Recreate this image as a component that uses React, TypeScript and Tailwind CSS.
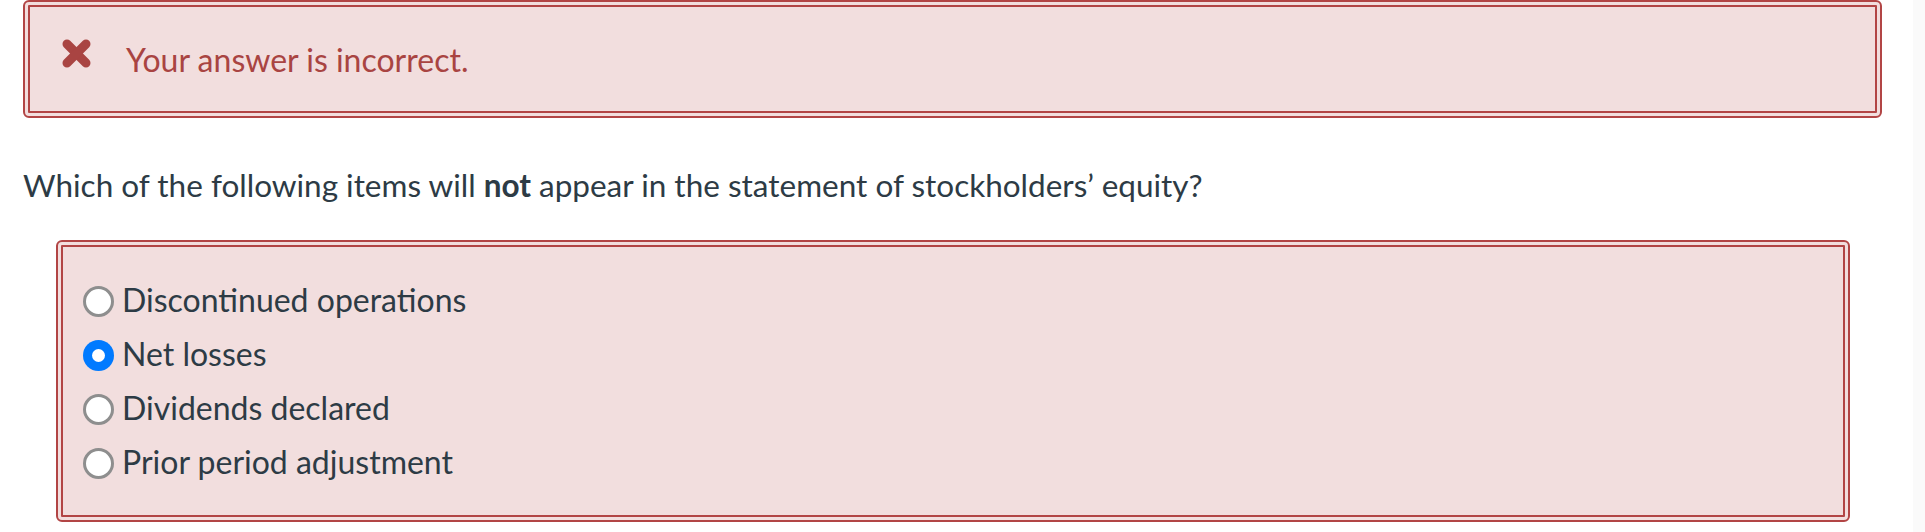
import React from "react";

const options = [
  { label: "Discontinued operations", checked: false },
  { label: "Net losses", checked: true },
  { label: "Dividends declared", checked: false },
  { label: "Prior period adjustment", checked: false },
];

function Radio({ checked }: { checked: boolean }) {
  if (checked) {
    return (
      <span className="mt-[13px] flex h-[31px] w-[31px] shrink-0 items-center justify-center rounded-full bg-[#007aff]">
        <span className="h-[13px] w-[13px] rounded-full bg-white" />
      </span>
    );
  }
  return (
    <span className="mt-[13px] block h-[31px] w-[31px] shrink-0 rounded-full border-[3px] border-[#8e8e8e] bg-white" />
  );
}

export default function App() {
  return (
    <div
      className="flex min-h-[532px] w-full bg-white text-[#2d3b45]"
      style={{ fontFamily: "Lato, 'Open Sans', sans-serif" }}
    >
      <div className="flex-1">
        {/* Feedback banner */}
        <div className="ml-[23px] w-[1859px] rounded-[6px] border-2 border-[#b24545] bg-[#f2dede] p-[3px]">
          <div className="flex h-[108px] items-start rounded-[1px] border-2 border-[#b24545] pl-[32px] pt-[32px]">
            <svg width="29" height="29" viewBox="0 0 29 29" className="shrink-0">
              <line x1="5" y1="5" x2="24" y2="24" stroke="#a94442" strokeWidth="9" strokeLinecap="round" />
              <line x1="24" y1="5" x2="5" y2="24" stroke="#a94442" strokeWidth="9" strokeLinecap="round" />
            </svg>
            <span className="ml-[35px] mt-[2px] text-[32px] leading-[38px] text-[#a94442]">
              Your answer is incorrect.
            </span>
          </div>
        </div>

        {/* Question */}
        <p className="mt-[48px] pl-[23px] text-[31.5px] leading-[38px]">
          Which of the following items will <strong className="font-bold">not</strong> appear in the statement of stockholders’ equity?
        </p>

        {/* Answers */}
        <div className="ml-[56px] mt-[36px] w-[1794px] rounded-[6px] border-2 border-[#b24545] bg-[#f2dede] p-[3px]">
          <div className="rounded-[1px] border-2 border-[#b24545] pb-[26px] pl-[20px] pt-[26px]">
            {options.map((o) => (
              <label key={o.label} className="flex h-[54px] items-start gap-[8px]">
                <Radio checked={o.checked} />
                <span className="text-[32px] leading-[54px]">{o.label}</span>
              </label>
            ))}
          </div>
        </div>
      </div>
      <div className="w-[12px] shrink-0 bg-[#fafafa]" />
    </div>
  );
}
